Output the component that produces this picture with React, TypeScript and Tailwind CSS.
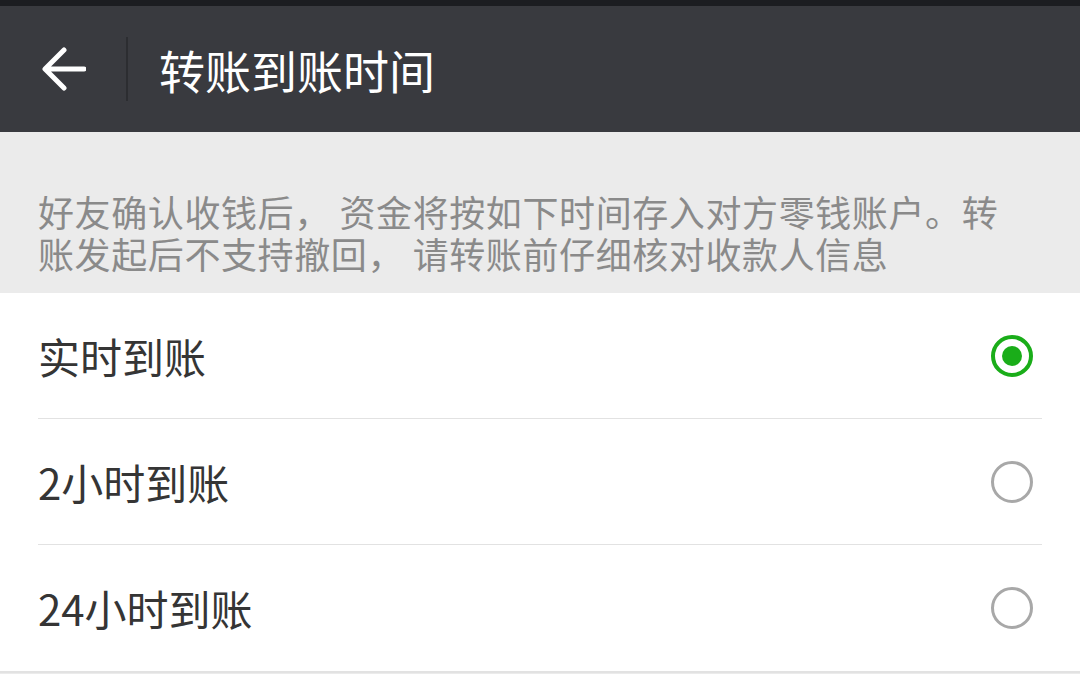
const options = [
  { label: "实时到账", checked: true },
  { label: "2小时到账", checked: false },
  { label: "24小时到账", checked: false },
];

function Radio({ checked }: { checked: boolean }) {
  if (checked) {
    return (
      <div className="flex h-[42px] w-[42px] items-center justify-center rounded-full border-[4px] border-[#1aad19]">
        <div className="h-[20px] w-[20px] rounded-full bg-[#1aad19]" />
      </div>
    );
  }
  return <div className="h-[42px] w-[42px] rounded-full border-[3px] border-[#a8a8a8]" />;
}

export default function App() {
  return (
    <div
      className="h-[674px] w-[1080px] overflow-hidden bg-[#ebebeb]"
      style={{ fontFamily: '"Noto Sans CJK SC", "Noto Sans", sans-serif' }}
    >
      {/* status strip */}
      <div className="h-[6px] bg-[#1c1d21]" />

      {/* header */}
      <div className="flex h-[126px] items-center bg-[#393a3f]">
        <div className="flex w-[126px] items-center pl-[42px]">
          <svg width="44" height="44" viewBox="0 0 44 44" fill="none">
            <path d="M42 22H4M22 3L3 22l19 19" stroke="#fff" strokeWidth="5" strokeLinecap="round" strokeLinejoin="round" />
          </svg>
        </div>
        <div className="h-[64px] w-[2px] bg-[#2c2d31]" />
        <div className="pl-[31px] text-[46px] leading-none text-white">转账到账时间</div>
      </div>

      {/* notice */}
      <div className="px-[38px] pt-[58px] pb-[19px] text-[36px] leading-[42px] tracking-[0.6px] text-[#8a8a8a]">
        好友确认收钱后， 资金将按如下时间存入对方零钱账户。转
        <br />
        账发起后不支持撤回， 请转账前仔细核对收款人信息
      </div>

      {/* options */}
      <div className="bg-white">
        {options.map((opt, i) => (
          <div key={opt.label} className="pl-[38px]">
            <div
              className={
                i < options.length - 1
                  ? "mr-[38px] flex h-[126px] items-center justify-between border-b border-[#e2e2e2]"
                  : "mr-[38px] flex h-[126px] items-center justify-between"
              }
            >
              <span className="text-[42px] leading-none text-[#353535]">{opt.label}</span>
              <div className="mr-[9px]">
                <Radio checked={opt.checked} />
              </div>
            </div>
          </div>
        ))}
      </div>
      <div className="h-[2px] bg-[#e2e2e2]" />
    </div>
  );
}
